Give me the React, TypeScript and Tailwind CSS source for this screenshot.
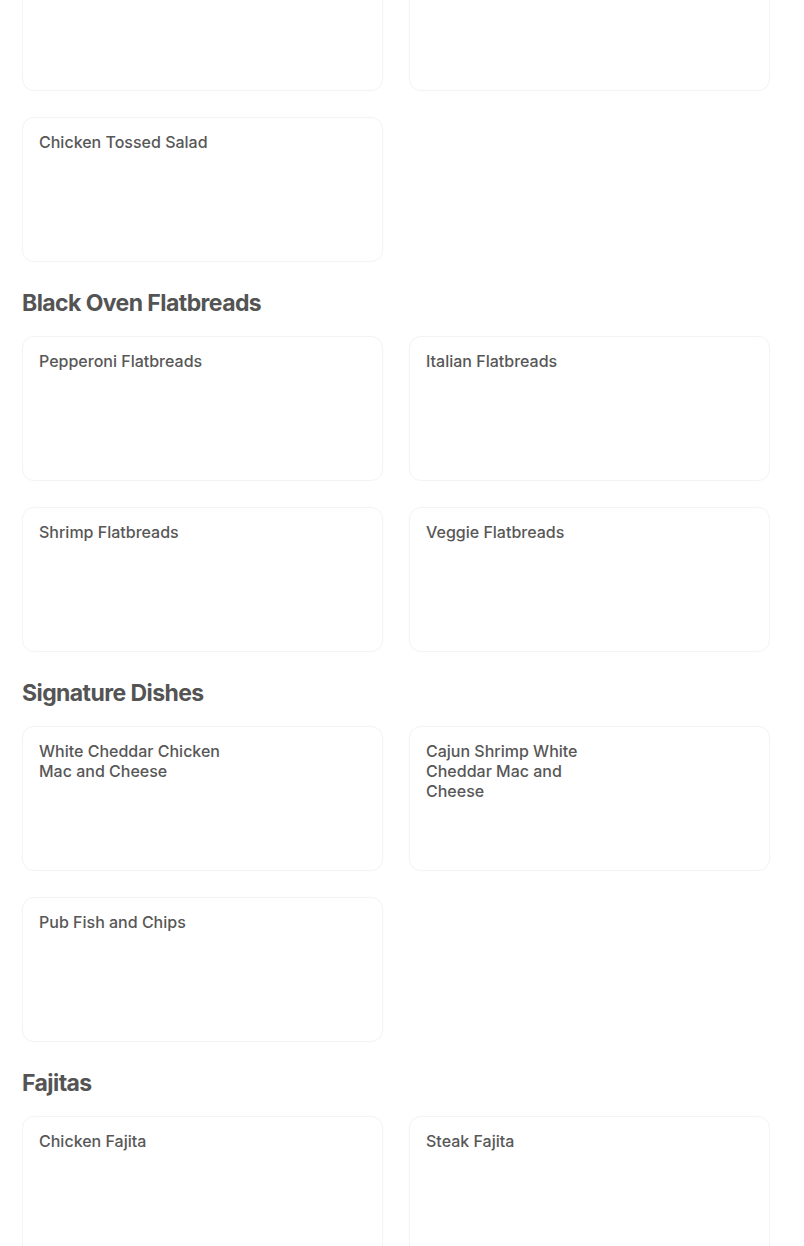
const sections: { title?: string; items: (string | null)[] }[] = [
  { items: ["", "", "Chicken Tossed Salad"] },
  { title: "Black Oven Flatbreads", items: ["Pepperoni Flatbreads", "Italian Flatbreads", "Shrimp Flatbreads", "Veggie Flatbreads"] },
  { title: "Signature Dishes", items: ["White Cheddar Chicken Mac and Cheese", "Cajun Shrimp White Cheddar Mac and Cheese", "Pub Fish and Chips"] },
  { title: "Fajitas", items: ["Chicken Fajita", "Steak Fajita"] },
];

function MenuCard({ name }: { name: string | null }) {
  return (
    <div className="h-[145px] rounded-xl border border-[#f4f4f4] bg-white px-4 pt-[14px] shadow-[0_0_2px_rgba(0,0,0,0.02)]">
      <div className="w-[186px] text-[16px] leading-5 font-medium text-[#575757]">{name}</div>
    </div>
  );
}

export default function App() {
  return (
    <div className="h-[1246px] overflow-hidden bg-white" style={{ fontFamily: "Inter, 'Noto Sans', sans-serif" }}>
      <div className="-mt-[54px] pl-[22px] pr-[34px]">
        {sections.map((section, i) => (
          <section key={i} className={section.title ? "mt-[25px]" : ""}>
            {section.title && (
              <h2 className="mb-[17px] h-8 text-[23px] leading-8 font-bold tracking-tight text-[#545454]">{section.title}</h2>
            )}
            <div className="grid grid-cols-2 gap-[26px]">
              {section.items.map((name, j) => (
                <MenuCard key={j} name={name} />
              ))}
            </div>
          </section>
        ))}
      </div>
    </div>
  );
}
